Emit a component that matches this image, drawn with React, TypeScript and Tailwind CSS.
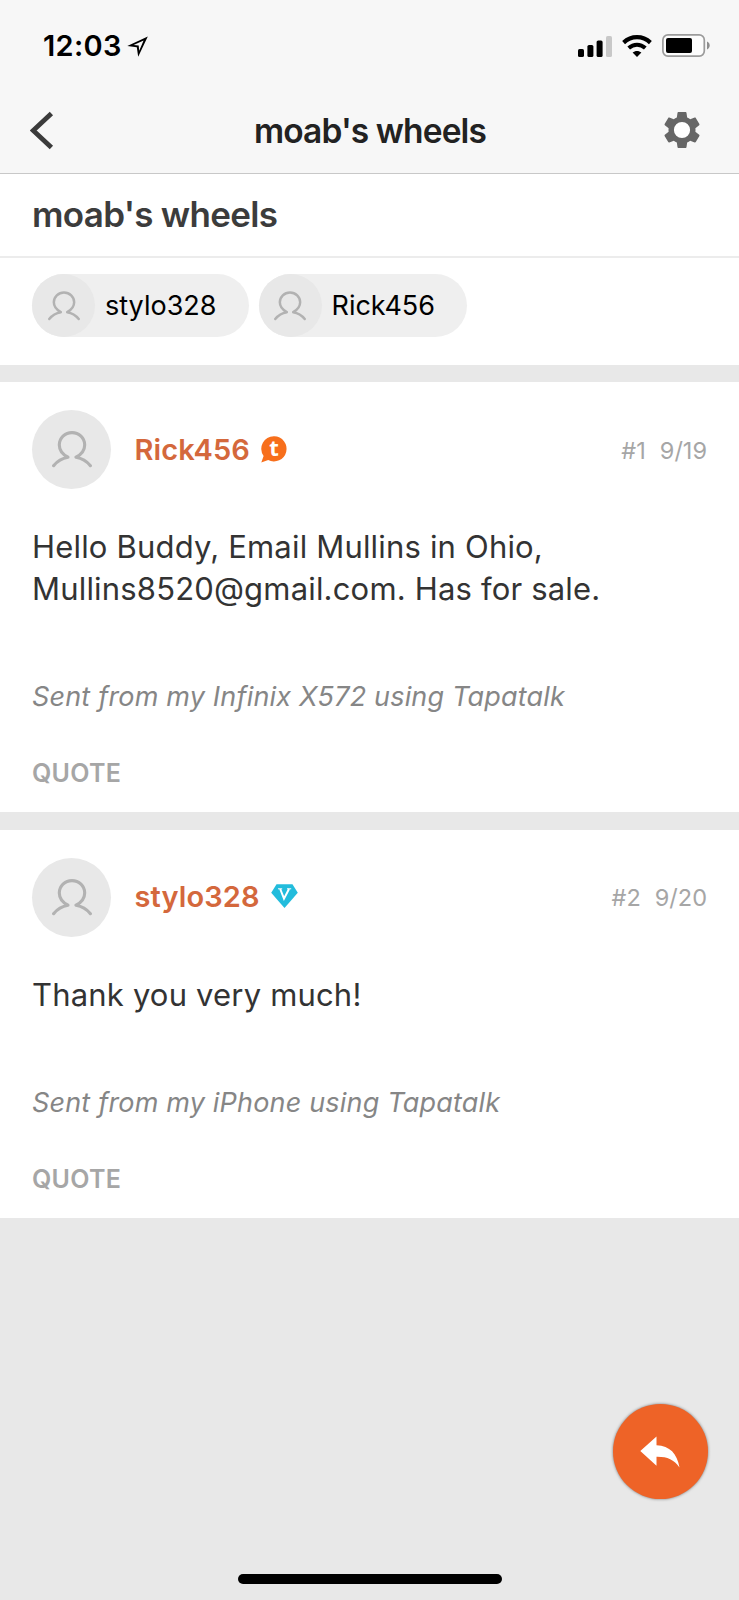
import type { ReactNode } from 'react';

type Post = {
  id: number;
  author: string;
  badge: ReactNode;
  date: string;
  lines: string[];
  signature: string;
};

const PersonIcon = ({ className }: { className?: string }) => (
  <svg viewBox="0 0 40 37" fill="none" stroke="#b2b2b2" strokeWidth="3.1" strokeLinecap="round" strokeLinejoin="round" className={className}>
    <path d="M1.6 34.7C5 30.4 9.8 27.2 16 26.2C11.2 23.6 7.3 19.4 7.3 13.9A12.7 12.3 0 0 1 32.7 13.9C32.7 19.4 28.8 23.6 24 26.2C30.2 27.2 35 30.4 38.4 34.7" />
  </svg>
);

const TapatalkBadge = () => (
  <svg viewBox="0 0 26 27" className="h-[27px] w-[26px] overflow-visible">
    <path d="M13.2 0.2A12.6 12.6 0 1 1 7.2 24L0.3 26.6L2.6 20A12.6 12.6 0 0 1 13.2 0.2Z" fill="#f76f1c" />
    <text x="13" y="19.6" textAnchor="middle" fontSize="22" fontWeight="700" fill="#fff" fontFamily="Open Sans, sans-serif">t</text>
  </svg>
);

const VipBadge = () => (
  <svg viewBox="0 0 27 24" className="mb-[2px] h-6 w-[27px]">
    <path d="M5.5 0.3H21.5L26.8 8.8L13.5 24L0.2 8.8Z" fill="#22bcdc" />
    <path d="M9.2 5L13 14.6L18 5" fill="none" stroke="#fff" strokeWidth="2" />
    <path d="M7 4.8H11.2M16 4.8H20.2" fill="none" stroke="#fff" strokeWidth="1" />
  </svg>
);

const posts: Post[] = [
  {
    id: 1,
    author: 'Rick456',
    badge: <TapatalkBadge />,
    date: '9/19',
    lines: ['Hello Buddy, Email Mullins in Ohio,', 'Mullins8520@gmail.com. Has for sale.'],
    signature: 'Sent from my Infinix X572 using Tapatalk',
  },
  {
    id: 2,
    author: 'stylo328',
    badge: <VipBadge />,
    date: '9/20',
    lines: ['Thank you very much!'],
    signature: 'Sent from my iPhone using Tapatalk',
  },
];

const StatusBar = () => (
  <div className="flex h-[88px] items-start justify-between pl-[43px] pr-[29px] pt-[30px]">
    <div className="flex items-center">
      <span className="text-[29px] font-semibold leading-8 tracking-[0.3px] text-black">12:03</span>
      <svg viewBox="0 0 21 21" className="ml-[5px] h-[21px] w-[21px]">
        <path fillRule="evenodd" d="M20.8 0.6L0.3 10L9.8 11.2L11.2 20.8ZM16.6 4.6L12.2 14.8L11.7 9.5L6.6 9Z" />
      </svg>
    </div>
    <div className="flex items-center pt-[4px]">
      <svg viewBox="0 0 34 22" className="h-[22px] w-[34px]">
        <rect x="0" y="14" width="6" height="8" rx="1.6" />
        <rect x="9.4" y="10" width="6" height="12" rx="1.6" />
        <rect x="18.6" y="5.5" width="6" height="16.5" rx="1.6" />
        <rect x="28" y="1" width="6" height="21" rx="1.6" fill="#c8c8c8" />
      </svg>
      <svg viewBox="0 0 30 22" className="ml-[10px] h-[22px] w-[30px]">
        <path d="M1.6 7.6C9.3 0.4 20.7 0.4 28.4 7.6" fill="none" stroke="#000" strokeWidth="4.2" />
        <path d="M6.7 13C11.6 8.6 18.4 8.6 23.3 13" fill="none" stroke="#000" strokeWidth="4" />
        <path d="M10.6 17.6C13.2 15.4 16.8 15.4 19.4 17.6L15 22Z" />
      </svg>
      <svg viewBox="0 0 48 23" className="ml-[10px] h-[23px] w-12">
        <rect x="0.9" y="0.9" width="41.4" height="21.2" rx="5" fill="#fcfcfc" stroke="#9b9b9b" strokeWidth="1.7" />
        <rect x="4" y="4" width="26" height="15" rx="2" />
        <path d="M45 7.6C48.6 9 48.6 14 45 15.4Z" fill="#8e8e8e" />
      </svg>
    </div>
  </div>
);

const NavBar = () => (
  <div className="flex h-[85px] items-center justify-between pl-[30px] pr-[39px]">
    <button className="w-[46px]">
      <svg viewBox="0 0 24 40" className="h-10 w-6">
        <path d="M21.4 2.4L3.2 19.5L21.4 36.6" fill="none" stroke="#3b3b3b" strokeWidth="4.8" />
      </svg>
    </button>
    <h1 className="text-[33.5px] font-semibold leading-10 tracking-[-0.87px] text-[#222]">moab's wheels</h1>
    <button>
      <svg viewBox="2 2 20 20" className="mb-px h-9 w-9">
        <circle cx="12" cy="12" r="5" fill="#fff" />
        <path
          fill="#666"
          d="M19.43 12.98c.04-.32.07-.64.07-.98s-.03-.66-.07-.98l2.11-1.65c.19-.15.24-.42.12-.64l-2-3.46c-.12-.22-.39-.3-.61-.22l-2.49 1c-.52-.4-1.08-.73-1.69-.98l-.38-2.65C14.46 2.18 14.25 2 14 2h-4c-.25 0-.46.18-.49.42l-.38 2.65c-.61.25-1.17.59-1.69.98l-2.49-1c-.23-.09-.49 0-.61.22l-2 3.46c-.13.22-.07.49.12.64l2.11 1.65c-.04.32-.07.65-.07.98s.03.66.07.98l-2.11 1.65c-.19.15-.24.42-.12.64l2 3.46c.12.22.39.3.61.22l2.49-1c.52.4 1.08.73 1.69.98l.38 2.65c.03.24.24.42.49.42h4c.25 0 .46-.18.49-.42l.38-2.65c.61-.25 1.17-.59 1.69-.98l2.49 1c.23.09.49 0 .61-.22l2-3.46c.12-.22.07-.49-.12-.64zM12 16.5a4.5 4.5 0 1 1 0-9 4.5 4.5 0 0 1 0 9z"
        />
      </svg>
    </button>
  </div>
);

const UserChip = ({ name }: { name: string }) => (
  <div className="flex h-[63px] items-center rounded-full bg-[#efefef] pr-[32px]">
    <span className="flex h-[63px] w-[63px] items-center justify-center rounded-full bg-[#e8e8e8]">
      <PersonIcon className="h-[30px] w-8" />
    </span>
    <span className="ml-[10px] mt-[2px] text-[27px] text-black">{name}</span>
  </div>
);

const PostCard = ({ post }: { post: Post }) => (
  <article className="bg-white px-8 pt-[28px]">
    <div className="flex h-[79px] items-center">
      <span className="flex h-[79px] w-[79px] shrink-0 items-center justify-center rounded-full bg-[#e8e8e8]">
        <PersonIcon className="h-[37px] w-10" />
      </span>
      <span className="ml-[23.5px] mr-[11px] text-[29px] font-semibold tracking-[0.1px] text-[#d4683c]">{post.author}</span>
      {post.badge}
      <span className="ml-auto mt-[2px] text-[23.5px] text-[#a6a6a6]">#{post.id}</span>
      <span className="ml-[14px] mt-[2px] text-[23.5px] text-[#a6a6a6]">{post.date}</span>
    </div>
    <div className="mt-[37px] text-[31px] leading-[41.5px] tracking-[0.18px] text-[#333]">
      {post.lines.map((line) => (
        <p key={line} className="whitespace-nowrap">{line}</p>
      ))}
    </div>
    <p className="mt-[70px] whitespace-nowrap text-[27px] italic leading-[36px] tracking-[0.18px] text-[#868686]">{post.signature}</p>
    <button className="mt-[42px] block h-[54.5px] text-left text-[25px] font-semibold leading-[32px] tracking-[0.3px] text-[#a6a6a6]">
      <span className="block h-full">QUOTE</span>
    </button>
  </article>
);

const App = () => (
  <div className="relative h-[1600px] w-[739px] overflow-hidden bg-[#e8e8e8] font-['Inter',sans-serif]">
    <header className="h-[174px] border-b border-[#c8c8c8] bg-[#f7f7f7]">
      <StatusBar />
      <NavBar />
    </header>

    <section className="h-[191px] bg-white">
      <div className="flex h-[84px] items-center border-b-2 border-[#ececec] px-8 pb-[2px]">
        <h2 className="text-[35px] font-semibold tracking-[-0.7px] text-[#3c3c3c]">moab's wheels</h2>
      </div>
      <div className="flex gap-[10px] px-8 pt-4">
        <UserChip name="stylo328" />
        <UserChip name="Rick456" />
      </div>
    </section>

    <main className="flex flex-col gap-[18px] pt-[17px]">
      {posts.map((post) => (
        <PostCard key={post.id} post={post} />
      ))}
    </main>

    {/* Floating reply button */}
    <button className="absolute left-[612.5px] top-[1404px] flex h-[95px] w-[95px] items-center justify-center rounded-full bg-[#ee6327] shadow-[0_0_3px_rgba(0,0,0,0.5)]">
      <svg viewBox="0 0 40 32" className="h-8 w-10">
        <path d="M0.3 15L16.5 0.5V9.2C30 9.8 37 17.5 39.5 31.5C34 23.5 27 20.6 16.5 20.8V29.8Z" fill="#fff" />
      </svg>
    </button>

    {/* Home indicator */}
    <div className="absolute left-[238px] top-[1574px] h-[10px] w-[264px] rounded-full bg-black" />
  </div>
);

export default App;
